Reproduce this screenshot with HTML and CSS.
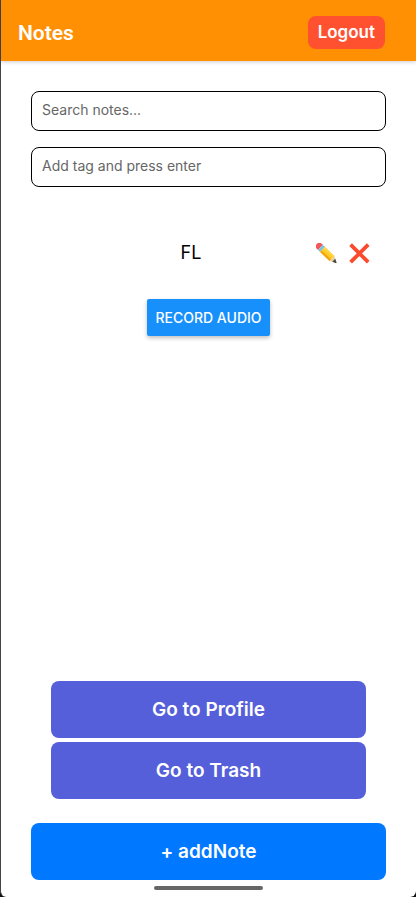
FILE: index.html
```html
<!DOCTYPE html>
<html lang="en">
<head>
<meta charset="utf-8">
<meta name="viewport" content="width=device-width, initial-scale=1">
<title>Notes</title>
<link rel="stylesheet" href="styles.css">
</head>
<body>
<div class="screen">
  <header class="topbar">
    <h1 class="title">Notes</h1>
    <button class="logout" type="button">Logout</button>
  </header>
  <main class="content">
    <input class="field" type="search" aria-label="Search notes" placeholder="Search notes...">
    <input class="field" type="text" aria-label="Add tag" placeholder="Add tag and press enter">
    <div class="note">
      <span class="note-text">FL</span>
      <button class="icon-button" type="button" aria-label="Edit note">
        <svg viewBox="0 0 21 21" width="21" height="21" aria-hidden="true">
          <g transform="translate(3 3) rotate(44)">
            <path fill="#f4565a" d="M0-3.5Q-3-3.5-3-1V1Q-3 3.5 0 3.5H2V-3.5Z"/>
            <path fill="#7cc3dc" d="M2-3.5H5V3.5H2Z"/>
            <path fill="#ffc928" d="M5-3.5H18V3.5H5Z"/>
            <path fill="#ffd84a" d="M5-3.5H18V-1.5H5Z"/>
            <path fill="#f2a50c" d="M5 1.3H18V3.5H5Z"/>
            <path fill="#e9cf9c" d="M18-3.5L23-.8V.8L18 3.5Z"/>
            <path fill="#4b4a42" d="M20.5-2.1L24.2-.3V.5L20.5 2.1Z"/>
          </g>
        </svg>
      </button>
      <button class="icon-button" type="button" aria-label="Delete note">
        <svg viewBox="0 0 21 21" width="21" height="21" aria-hidden="true">
          <path fill="none" stroke="#fb4b2f" stroke-width="3.8" d="M1.6 1.6 19.2 19.2M19.2 1.6 1.6 19.2"/>
        </svg>
      </button>
    </div>
    <button class="record" type="button">RECORD AUDIO</button>
    <nav class="links">
      <button class="action nav-action" type="button">Go to Profile</button>
      <button class="action nav-action" type="button">Go to Trash</button>
    </nav>
    <button class="action add-action" type="button">+ addNote</button>
  </main>
  <div class="home-bar"></div>
</div>
</body>
</html>
```
FILE: styles.css
```css
* {
  box-sizing: border-box;
}

body {
  margin: 0;
  background: #111;
  color: #000;
  font-family: Inter, Roboto, sans-serif;
}

button,
input {
  margin: 0;
  font: inherit;
}

button {
  border: 0;
  padding: 0;
  cursor: pointer;
}

.screen {
  display: flex;
  flex-direction: column;
  min-height: 100vh;
  padding-bottom: 7px;
  border-left: 1px solid #444;
  border-radius: 0 0 6px 6px;
  background: #fff;
}

.topbar {
  display: flex;
  align-items: center;
  justify-content: space-between;
  padding: 16px 31px 12px 17px;
  background: #ff9003;
  box-shadow: 0 1px 4px rgba(0, 0, 0, 0.2);
}

.title {
  margin: 0;
  color: #fff;
  font-family: Roboto, sans-serif;
  font-size: 21px;
  font-weight: 600;
  line-height: 32px;
}

.logout {
  padding: 0 10px;
  border-radius: 8px;
  background: #ff502f;
  color: #fff;
  font-size: 17px;
  font-weight: 600;
  line-height: 33px;
}

.content {
  display: flex;
  flex: 1;
  flex-direction: column;
  padding: 30px 30px 6px;
}

.field {
  width: 100%;
  height: 40px;
  margin-bottom: 16px;
  padding: 0 10px 3px;
  border: 1px solid #000;
  border-radius: 8px;
  outline: 0;
  background: #fff;
  font-size: 14px;
  appearance: none;
}

.field::placeholder {
  color: #666;
  opacity: 1;
}

.note {
  display: flex;
  align-items: center;
  gap: 12px;
  margin: 38px 0 34px;
  padding: 0 16px 0 47px;
}

.note-text {
  flex: 1;
  font-size: 18px;
  line-height: 24px;
  text-align: center;
}

.icon-button {
  background: none;
  line-height: 0;
}

.record {
  align-self: center;
  padding: 0 8px;
  border-radius: 2px;
  background: #1890fb;
  box-shadow: 0 2px 4px rgba(0, 0, 0, 0.26);
  color: #fff;
  font-size: 14px;
  font-weight: 500;
  line-height: 37px;
}

.links {
  display: flex;
  flex-direction: column;
  gap: 4px;
  margin: auto 20px 24px;
}

.action {
  border-radius: 8px;
  color: #fff;
  font-size: 19px;
  font-weight: 600;
  line-height: 57px;
}

.nav-action {
  background: #555fd9;
}

.add-action {
  background: #0078ff;
}

.home-bar {
  width: 109px;
  height: 4px;
  margin: 0 auto;
  border-radius: 2px;
  background: #666;
}
```
